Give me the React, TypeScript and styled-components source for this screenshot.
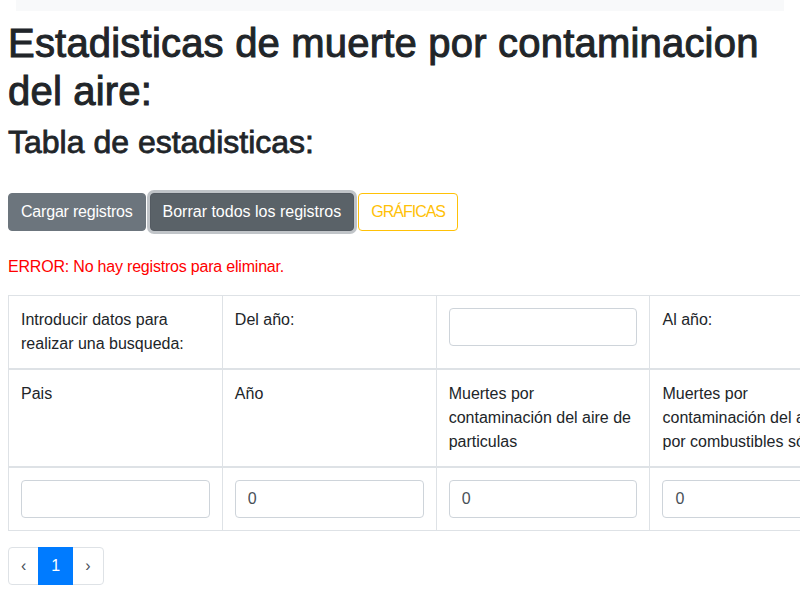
import React from "react";
import styled, { createGlobalStyle } from "styled-components";

const GlobalStyle = createGlobalStyle`
  html, body {
    margin: 0;
    padding: 0;
    overflow: hidden;
    background: #ffffff;
  }
  body {
    font-family: "Liberation Sans", Arial, sans-serif;
    font-size: 16px;
    line-height: 1.5;
    color: #212529;
  }
  * { box-sizing: border-box; }
`;

const Page = styled.div`
  padding: 0 8px;
  width: 800px;
`;

const TopStrip = styled.div`
  height: 11px;
  margin: 0 16px;
  background: #f8f9fa;
`;

const Title = styled.h1`
  margin: 8px 0 8px;
  font-size: 40px;
  font-weight: 500;
  line-height: 1.2;
  letter-spacing: 0.2px;
  -webkit-text-stroke: 1px #212529;
`;

const Subtitle = styled.h2`
  margin: 0 0 32px;
  font-size: 32px;
  font-weight: 500;
  line-height: 1.2;
  -webkit-text-stroke: 0.8px #212529;
`;

const Toolbar = styled.div`
  display: flex;
  gap: 4px;
  align-items: center;
`;

type Variant = "secondary" | "secondaryFocus" | "outlineWarning";

const Button = styled.button<{ $variant: Variant }>`
  font-family: inherit;
  font-size: 16px;
  line-height: 1.5;
  padding: 6px 12px;
  border-radius: 4px;
  border: 1px solid transparent;
  cursor: pointer;
  ${({ $variant }) =>
    $variant === "secondary"
      ? `background: #6c757d; border-color: #6c757d; color: #fff; letter-spacing: -0.2px;`
      : $variant === "secondaryFocus"
      ? `background: #5a6268; border-color: #545b62; color: #fff; letter-spacing: 0; box-shadow: 0 0 0 3px rgba(130,138,145,.5);`
      : `background: transparent; border-color: #ffc107; color: #ffc107; letter-spacing: -1px;`}
`;

const ErrorText = styled.p`
  margin: 24px 0 16px;
  color: #ff0000;
  font-size: 16px;
  line-height: 24px;
  letter-spacing: -0.2px;
`;

const Table = styled.table`
  border-collapse: collapse;
  table-layout: fixed;
  width: 1284px;
  margin-bottom: 16px;
  border: 1px solid #dee2e6;
`;

const HeadCell = styled.td`
  padding: 12px;
  vertical-align: top;
  border: 1px solid #dee2e6;
  border-bottom-width: 2px;
  font-weight: 400;
`;

const BodyCell = styled.td`
  padding: 12px;
  vertical-align: top;
  border: 1px solid #dee2e6;
`;

const Input = styled.input`
  display: block;
  width: 100%;
  height: 38px;
  padding: 6px 12px;
  font-family: inherit;
  font-size: 16px;
  line-height: 1.5;
  color: #495057;
  background: #fff;
  border: 1px solid #ced4da;
  border-radius: 4px;
  outline: none;
`;

const Pagination = styled.ul`
  display: flex;
  list-style: none;
  margin: 0;
  padding: 0;
`;

const PageLink = styled.li<{ $active?: boolean; $pos?: "first" | "last" }>`
  display: block;
  padding: 8px 12px;
  line-height: 20px;
  font-size: 16px;
  margin-left: ${({ $pos }) => ($pos === "first" ? "0" : "-1px")};
  border: 1px solid ${({ $active }) => ($active ? "#007bff" : "#dee2e6")};
  background: ${({ $active }) => ($active ? "#007bff" : "#fff")};
  color: ${({ $active }) => ($active ? "#fff" : "#495057")};
  position: relative;
  z-index: ${({ $active }) => ($active ? 1 : 0)};
  border-radius: ${({ $pos }) =>
    $pos === "first" ? "4px 0 0 4px" : $pos === "last" ? "0 4px 4px 0" : "0"};
`;

const headerCols = [
  "Pais",
  "Año",
  "Muertes por contaminación del aire de particulas",
  "Muertes por contaminación del aire por\u00a0combustibles sólidos",
  "Muertes por contaminación del aire de ozono",
  "Acciones",
];

export default function App() {
  return (
    <>
      <GlobalStyle />
      <TopStrip />
      <Page>
        <Title>Estadisticas de muerte por contaminacion del aire:</Title>
        <Subtitle>Tabla de estadisticas:</Subtitle>
        <Toolbar>
          <Button $variant="secondary">Cargar registros</Button>
          <Button $variant="secondaryFocus">Borrar todos los registros</Button>
          <Button $variant="outlineWarning">GRÁFICAS</Button>
        </Toolbar>
        <ErrorText>ERROR: No hay registros para eliminar.</ErrorText>
        <Table>
          <thead>
            <tr>
              <HeadCell>Introducir datos para realizar una busqueda:</HeadCell>
              <HeadCell>Del año:</HeadCell>
              <HeadCell>
                <Input type="text" />
              </HeadCell>
              <HeadCell>Al año:</HeadCell>
              <HeadCell>
                <Input type="text" />
              </HeadCell>
              <HeadCell />
            </tr>
            <tr>
              {headerCols.map((h) => (
                <HeadCell key={h}>{h}</HeadCell>
              ))}
            </tr>
          </thead>
          <tbody>
            <tr>
              <BodyCell>
                <Input type="text" />
              </BodyCell>
              <BodyCell>
                <Input type="number" defaultValue={0} />
              </BodyCell>
              <BodyCell>
                <Input type="number" defaultValue={0} />
              </BodyCell>
              <BodyCell>
                <Input type="number" defaultValue={0} />
              </BodyCell>
              <BodyCell>
                <Input type="number" defaultValue={0} />
              </BodyCell>
              <BodyCell>
                <Button $variant="secondary">Insertar</Button>
              </BodyCell>
            </tr>
          </tbody>
        </Table>
        <Pagination>
          <PageLink $pos="first">‹</PageLink>
          <PageLink $active>1</PageLink>
          <PageLink $pos="last">›</PageLink>
        </Pagination>
      </Page>
    </>
  );
}
